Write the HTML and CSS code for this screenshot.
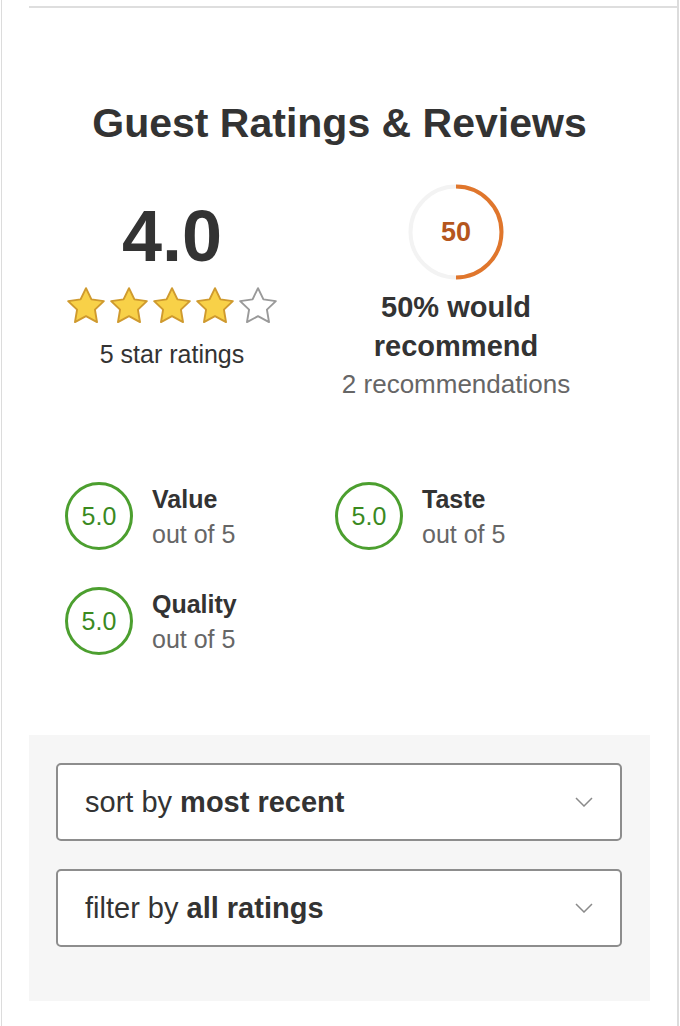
FILE: index.html
```html
<!DOCTYPE html>
<html>
<head>
<meta charset="utf-8">
<link rel="stylesheet" href="styles.css">
</head>
<body>
<div class="frame">
  <div class="topline"></div>
  <h1 class="title">Guest Ratings &amp; Reviews</h1>
  <div class="summary">
    <div class="col col-left">
      <div class="big-score">4.0</div>
      <div class="stars">
        <svg class="star" viewBox="0 0 24 24"><polygon class="on" points="12,1.8 15.1,8.2 22.2,9.2 17.1,14.1 18.3,21.2 12,17.8 5.7,21.2 6.9,14.1 1.8,9.2 8.9,8.2"/></svg>
        <svg class="star" viewBox="0 0 24 24"><polygon class="on" points="12,1.8 15.1,8.2 22.2,9.2 17.1,14.1 18.3,21.2 12,17.8 5.7,21.2 6.9,14.1 1.8,9.2 8.9,8.2"/></svg>
        <svg class="star" viewBox="0 0 24 24"><polygon class="on" points="12,1.8 15.1,8.2 22.2,9.2 17.1,14.1 18.3,21.2 12,17.8 5.7,21.2 6.9,14.1 1.8,9.2 8.9,8.2"/></svg>
        <svg class="star" viewBox="0 0 24 24"><polygon class="on" points="12,1.8 15.1,8.2 22.2,9.2 17.1,14.1 18.3,21.2 12,17.8 5.7,21.2 6.9,14.1 1.8,9.2 8.9,8.2"/></svg>
        <svg class="star" viewBox="0 0 24 24"><polygon class="off" points="12,1.8 15.1,8.2 22.2,9.2 17.1,14.1 18.3,21.2 12,17.8 5.7,21.2 6.9,14.1 1.8,9.2 8.9,8.2"/></svg>
      </div>
      <div class="count">5 star ratings</div>
    </div>
    <div class="col col-right">
      <div class="gauge">
        <svg viewBox="0 0 96 96" width="96" height="96">
          <circle cx="48" cy="48" r="45.5" fill="none" stroke="#f3f3f3" stroke-width="4"/>
          <path d="M48 2.5 A45.5 45.5 0 0 1 48 93.5" fill="none" stroke="#e0762c" stroke-width="4"/>
        </svg>
        <span class="gauge-num">50</span>
      </div>
      <div class="recommend">50% would<br>recommend</div>
      <div class="rec-count">2 recommendations</div>
    </div>
  </div>
  <div class="subratings">
    <div class="sub">
      <div class="ring">5.0</div>
      <div class="sub-text"><div class="sub-name">Value</div><div class="sub-of">out of 5</div></div>
    </div>
    <div class="sub">
      <div class="ring">5.0</div>
      <div class="sub-text"><div class="sub-name">Taste</div><div class="sub-of">out of 5</div></div>
    </div>
    <div class="sub">
      <div class="ring">5.0</div>
      <div class="sub-text"><div class="sub-name">Quality</div><div class="sub-of">out of 5</div></div>
    </div>
  </div>
  <div class="controls">
    <div class="select">
      <span>sort by <b>most recent</b></span>
      <svg class="chev" viewBox="0 0 18 10" width="18" height="10"><polyline points="1,1 9,9 17,1" fill="none" stroke="#8a8a8a" stroke-width="1.5"/></svg>
    </div>
    <div class="select">
      <span>filter by <b>all ratings</b></span>
      <svg class="chev" viewBox="0 0 18 10" width="18" height="10"><polyline points="1,1 9,9 17,1" fill="none" stroke="#8a8a8a" stroke-width="1.5"/></svg>
    </div>
  </div>
</div>
</body>
</html>
```

FILE: styles.css
```css
html, body {
  margin: 0;
  padding: 0;
  background: #fff;
}
body {
  font-family: "Liberation Sans", Arial, sans-serif;
  color: #333;
}
.frame {
  box-sizing: border-box;
  margin-left: 1px;
  width: 678px;
  min-height: 1026px;
  border-left: 1px solid #dcdcdc;
  border-right: 2px solid #dcdcdc;
  padding-top: 6px;
}
.topline {
  margin-left: 27px;
  height: 2px;
  background: #dedede;
}
.title {
  margin: 91px 0 0;
  font-size: 41px;
  line-height: 48px;
  font-weight: bold;
  text-align: center;
  color: #333;
}
.summary {
  display: flex;
  margin-top: 37px;
  padding-left: 28px;
}
.col {
  width: 284px;
  display: flex;
  flex-direction: column;
  align-items: center;
}
.big-score {
  margin-top: 16px;
  font-size: 72px;
  line-height: 72px;
  font-weight: bold;
  color: #333;
}
.stars {
  display: flex;
  margin-top: 13px;
  gap: 1px;
}
.star {
  width: 42px;
  height: 42px;
}
.star .on {
  fill: #f8d148;
  stroke: #cf9a2e;
  stroke-width: 1.1;
  stroke-linejoin: round;
}
.star .off {
  fill: #fff;
  stroke: #9a9a9a;
  stroke-width: 1.1;
  stroke-linejoin: round;
}
.count {
  margin-top: 12px;
  font-size: 25px;
  line-height: 30px;
  color: #333;
}
.gauge {
  position: relative;
  width: 96px;
  height: 96px;
}
.gauge svg {
  display: block;
}
.gauge-num {
  position: absolute;
  left: 0;
  right: 0;
  top: 0;
  line-height: 96px;
  text-align: center;
  font-size: 27px;
  font-weight: bold;
  color: #b5561d;
}
.recommend {
  margin-top: 8px;
  font-size: 29px;
  line-height: 39px;
  font-weight: bold;
  text-align: center;
  color: #333;
}
.rec-count {
  font-size: 26px;
  line-height: 36px;
  color: #666;
}
.subratings {
  display: grid;
  grid-template-columns: 270px 270px;
  row-gap: 35px;
  margin-top: 80px;
  padding-left: 63px;
}
.sub {
  display: flex;
  align-items: flex-start;
}
.ring {
  box-sizing: border-box;
  width: 68px;
  height: 68px;
  border: 3px solid #4c9f2f;
  border-radius: 50%;
  display: flex;
  align-items: center;
  justify-content: center;
  font-size: 25px;
  color: #3a8a1f;
}
.sub-text {
  margin-left: 19px;
  font-size: 25px;
  line-height: 35px;
}
.sub-name {
  font-weight: bold;
  color: #333;
}
.sub-of {
  color: #666;
}
.controls {
  margin: 78px 0 0 27px;
  width: 621px;
  box-sizing: border-box;
  background: #f6f6f6;
  padding: 28px 28px 54px 27px;
  display: flex;
  flex-direction: column;
  gap: 28px;
}
.select {
  box-sizing: border-box;
  height: 78px;
  background: #fff;
  border: 2px solid #8d8d8d;
  border-radius: 5px;
  display: flex;
  align-items: center;
  justify-content: space-between;
  padding: 0 27px 0 27px;
  font-size: 29px;
  color: #333;
}
.select b {
  font-weight: bold;
}
.chev {
  display: block;
}
```
